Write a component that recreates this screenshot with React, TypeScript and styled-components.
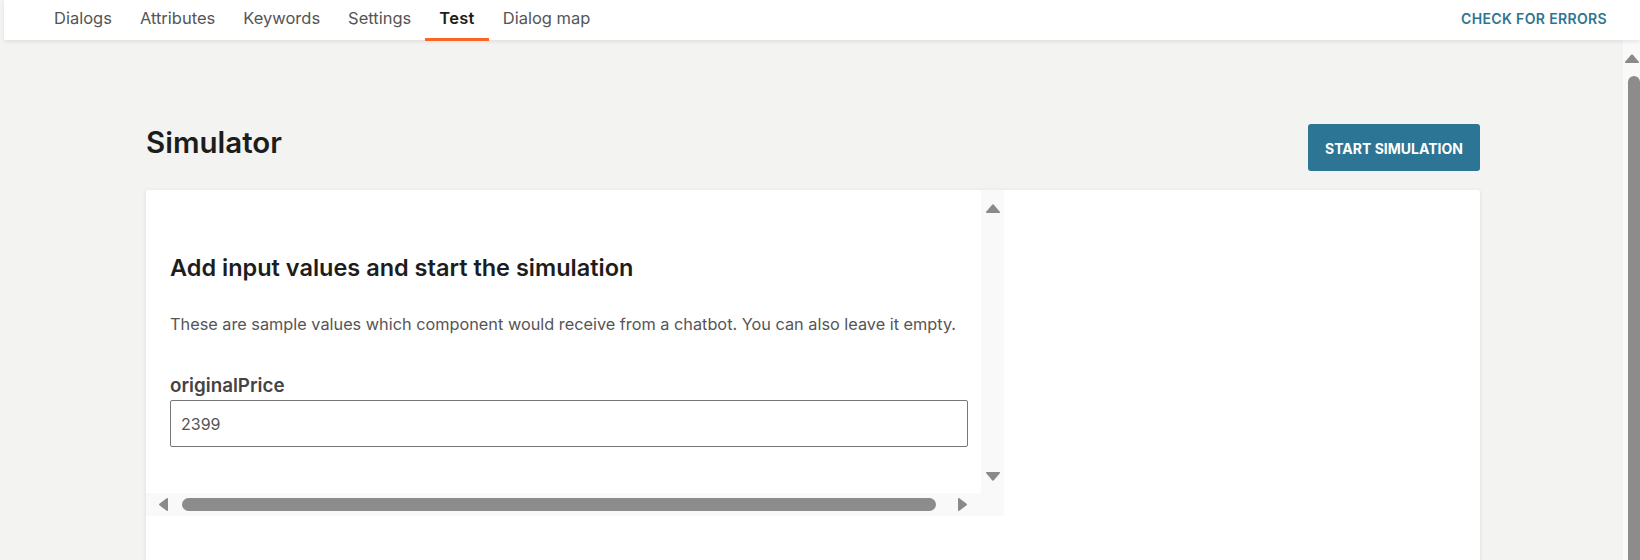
import { createGlobalStyle, styled } from 'styled-components';

const tabs = ['Dialogs', 'Attributes', 'Keywords', 'Settings', 'Test', 'Dialog map'];

export default function App(): JSX.Element {
  return (
    <>
      <GlobalStyle />
      <Page>
        <Header>
          <Tabs>
            {tabs.map((tab) => (
              <Tab key={tab} $active={tab === 'Test'}>
                {tab}
              </Tab>
            ))}
          </Tabs>
          <LinkButton>Check for errors</LinkButton>
        </Header>
        <Body>
          <Content>
            <TitleRow>
              <Title>Simulator</Title>
              <PrimaryButton>Start simulation</PrimaryButton>
            </TitleRow>
            <Card>
              <Frame>
                <FrameContent>
                  <FrameHeading>Add input values and start the simulation</FrameHeading>
                  <Description>
                    These are sample values which component would receive from a chatbot. You can
                    also leave it empty.
                  </Description>
                  <Label htmlFor={'originalPrice'}>originalPrice</Label>
                  <Input id={'originalPrice'} defaultValue={'2399'} />
                </FrameContent>
                <VTrack>
                  <Arrow dir={'up'} />
                  <Arrow dir={'down'} />
                </VTrack>
                <HTrack>
                  <Arrow dir={'left'} />
                  <HThumb />
                  <Arrow dir={'right'} />
                </HTrack>
                <Corner />
              </Frame>
            </Card>
          </Content>
          <PageTrack>
            <Arrow dir={'up'} />
            <VThumb />
          </PageTrack>
        </Body>
      </Page>
    </>
  );
}

function Arrow({ dir }: { dir: 'up' | 'down' | 'left' | 'right' }): JSX.Element {
  const vertical = dir === 'up' || dir === 'down';
  const rotate = { up: 0, down: 180, left: 0, right: 180 }[dir];
  return vertical ? (
    <ArrowSvg width={16} height={11} viewBox={'0 0 16 11'} style={{ transform: `rotate(${rotate}deg)` }}>
      <path d={'M8 1.2 Q8.6 1.2 9.1 1.9 L15 9 Q15.3 10 14.3 10 L1.7 10 Q0.7 10 1 9 L6.9 1.9 Q7.4 1.2 8 1.2 Z'} />
    </ArrowSvg>
  ) : (
    <ArrowSvg width={11} height={15} viewBox={'0 0 11 15'} style={{ transform: `rotate(${rotate}deg)` }}>
      <path d={'M1 7.5 Q1 6.9 1.7 6.4 L9 1 Q10 0.6 10 1.7 L10 13.3 Q10 14.4 9 14 L1.7 8.6 Q1 8.1 1 7.5 Z'} />
    </ArrowSvg>
  );
}

const GlobalStyle = createGlobalStyle`
  html, body {
    margin: 0;
    height: 100%;
    overflow: hidden;
  }

  body {
    background: #f3f3f2;
    font-family: Inter, "Noto Sans", sans-serif;
    color: #222;
  }
`;

const Page = styled.div`
  display: flex;
  flex-direction: column;
  height: 560px;
`;

const Header = styled.header`
  display: flex;
  align-items: stretch;
  justify-content: space-between;
  height: 40px;
  margin-left: 4px;
  padding: 0 33px 0 36px;
  background: #fff;
  box-shadow: 0 2px 4px rgba(0, 0, 0, 0.08);
  position: relative;
  z-index: 1;
`;

const Tabs = styled.nav`
  display: flex;
  align-items: stretch;
`;

const Tab = styled.div<{ $active?: boolean }>`
  display: flex;
  align-items: center;
  padding: 0 14px 2px;
  font-size: 16.5px;
  font-weight: ${(p) => (p.$active ? 600 : 400)};
  letter-spacing: ${(p) => (p.$active ? '0.3px' : '0')};
  color: ${(p) => (p.$active ? '#1d1d1d' : '#555')};
  border-bottom: 3px solid ${(p) => (p.$active ? '#fb6526' : 'transparent')};
  margin-bottom: -1px;
`;

const LinkButton = styled.button`
  border: none;
  background: none;
  padding: 0 0 4px;
  font-family: inherit;
  font-size: 14px;
  font-weight: 600;
  text-transform: uppercase;
  letter-spacing: 0.35px;
  color: #2d7594;
`;

const Body = styled.div`
  display: flex;
  flex: 1;
  min-height: 0;
`;

const Content = styled.main`
  flex: 1;
  padding: 84px 143px 0 146px;
`;

const TitleRow = styled.div`
  display: flex;
  align-items: flex-start;
  justify-content: space-between;
  margin-bottom: 19px;
`;

const Title = styled.h1`
  margin: 0;
  font-size: 29.5px;
  line-height: 37px;
  font-weight: 600;
  color: #1d1d1d;
`;

const PrimaryButton = styled.button`
  width: 172px;
  height: 47px;
  padding: 2px 0 0;
  border: none;
  border-radius: 3px;
  background: #2d7594;
  color: #fff;
  font-family: inherit;
  font-size: 14px;
  font-weight: 700;
  text-transform: uppercase;
`;

const Card = styled.section`
  height: 400px;
  background: #fff;
  border-radius: 3px;
  box-shadow: 0 1px 4px rgba(0, 0, 0, 0.1);
`;

const Frame = styled.div`
  display: grid;
  grid-template-columns: 835px 23px;
  grid-template-rows: 303px 23px;
  width: 858px;
`;

const FrameContent = styled.div`
  padding: 62px 0 0 24px;
  overflow: hidden;
`;

const FrameHeading = styled.h2`
  margin: 0 0 29px;
  font-size: 23.5px;
  line-height: 32px;
  font-weight: 600;
  color: #1d1d1d;
`;

const Description = styled.p`
  margin: 0 0 39px;
  font-size: 16.3px;
  line-height: 22px;
  color: #555;
  white-space: nowrap;
`;

const Label = styled.label`
  display: block;
  margin-bottom: 2px;
  font-size: 18.8px;
  line-height: 24px;
  font-weight: 600;
  color: #444;
`;

const Input = styled.input`
  box-sizing: border-box;
  width: 798px;
  height: 47px;
  padding: 0 10px;
  border: 1px solid #767676;
  border-radius: 2px;
  font-family: inherit;
  font-size: 16px;
  color: #555;
  outline: none;
`;

const VTrack = styled.div`
  display: flex;
  flex-direction: column;
  align-items: center;
  justify-content: space-between;
  padding: 13px 0 11px;
  background: #f9f9f9;
`;

const HTrack = styled.div`
  display: flex;
  align-items: center;
  padding: 0 13px 0 12px;
  background: #f9f9f9;
`;

const HThumb = styled.div`
  width: 754px;
  height: 13px;
  margin: 0 21px 0 13px;
  border-radius: 7px;
  background: #8c8c8c;
`;

const Corner = styled.div`
  background: #f9f9f9;
`;

const ArrowSvg = styled.svg`
  display: block;
  fill: #8a8a8a;
  flex-shrink: 0;
`;

const PageTrack = styled.aside`
  display: flex;
  flex-direction: column;
  align-items: flex-end;
  width: 17px;
  padding-top: 13px;
  background: #f9f9f9;
`;

const VThumb = styled.div`
  width: 12px;
  flex: 1;
  margin-top: 12px;
  border-radius: 6px 6px 0 0;
  background: #8c8c8c;
`;
